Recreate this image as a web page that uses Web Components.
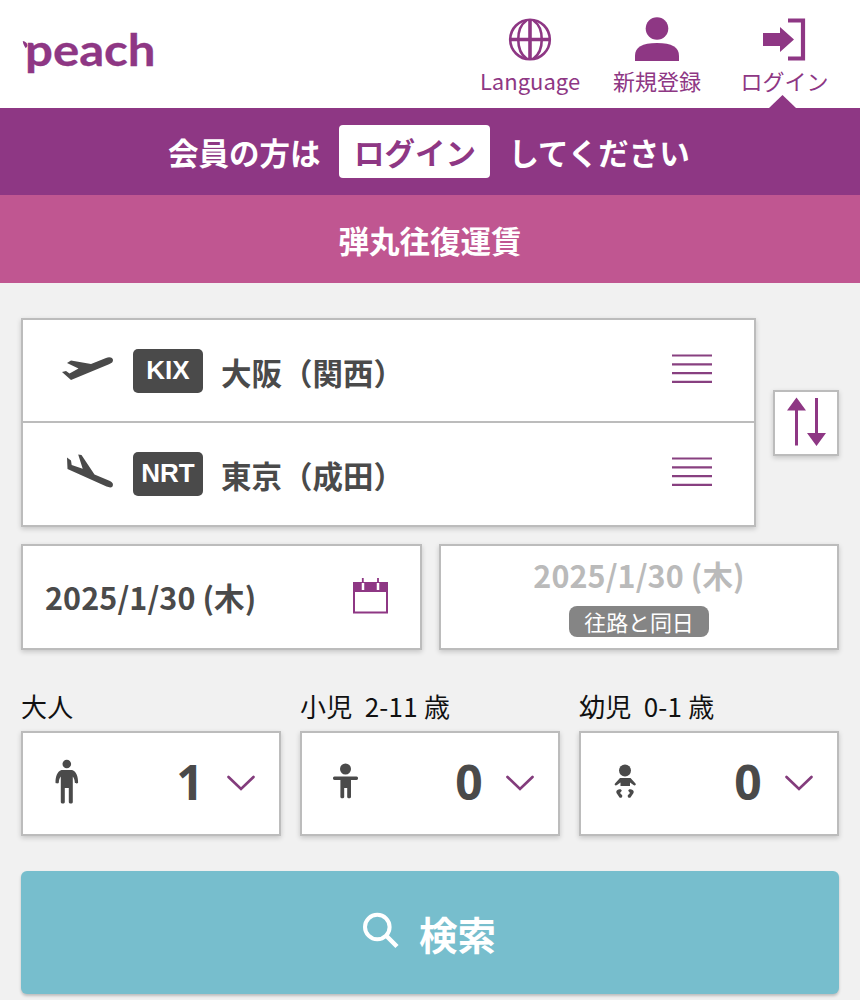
<!DOCTYPE html>
<html lang="ja">
<head>
<meta charset="utf-8">
<title>Peach</title>
<style>
html{background:#fff}
body{margin:0;width:860px;height:1002px;overflow:hidden;font-family:"Noto Sans CJK JP","Noto Sans",sans-serif;--purple:#8e3784;--dark:#4a4a4a;--line:#bcbcbc}
</style>
</head>
<body>
<peach-app></peach-app>
<script>
const define = (name, html) => {
  const t = document.createElement('template');
  t.innerHTML = '<style>*{box-sizing:border-box}svg{display:block;flex:none}</style>' + html;
  customElements.define(name, class extends HTMLElement {
    constructor() {
      super();
      this.attachShadow({ mode: 'open' }).appendChild(t.content.cloneNode(true));
    }
  });
};

define('peach-logo', `
<style>:host{display:block;width:140px;height:70px}text{font:700 44.500px Lato,sans-serif;fill:var(--purple);stroke:var(--purple);stroke-width:.3}</style>
<svg width="140" height="70" viewBox="20 16 140 70">
  <text x="25" y="65.500" textLength="130.500" lengthAdjust="spacingAndGlyphs">peach</text>
  <path d="M22.800 41c2.500.6 4.500 1.600 4.700 5l-1.700 2.200C24.500 46 23 44.500 22.800 41z" fill="#8e3784"/>
</svg>`);

define('nav-item', `
<style>
:host{display:flex;flex-direction:column;align-items:center;color:var(--purple);font-size:22px;line-height:32px;position:relative;white-space:nowrap}
.icon{height:64px;display:flex}
</style>
<div class="icon"><slot name="icon"></slot></div><slot></slot>`);

define('site-header', `
<style>
:host{display:flex;height:108px;background:#fff;position:relative}
peach-logo{margin:16px 0 0 20px}
nav{display:flex;margin-left:auto;margin-right:32px}
nav-item:nth-child(1){width:100px;margin-right:33px}
nav-item:nth-child(2){width:88px;margin-right:40px}
nav-item:nth-child(3){width:87px}
.pointer{position:absolute;left:769px;bottom:0}
</style>
<peach-logo></peach-logo>
<nav>
<nav-item><svg slot="icon" width="44" height="66" viewBox="507.500 0 44 66" fill="none" stroke="#8e3784" stroke-width="2.600"><circle cx="529.500" cy="39.500" r="19.800"/><path d="M509 39.500h41" stroke-width="3.500"/><path d="M529.500 20v39" stroke-width="3.600"/><path d="M526 20.500C515 28 515 51 526 58.500M533 20.500C544 28 544 51 533 58.500"/></svg>Language</nav-item>
<nav-item><svg slot="icon" width="46" height="66" viewBox="634 0 46 66" fill="#8e3784"><circle cx="657" cy="28.500" r="11.300"/><path d="M635 61V56C635 47 642 43 657 43s22 4 22 13v5z"/></svg>新規登録</nav-item>
<nav-item><svg slot="icon" width="44" height="66" viewBox="763 0 44 66"><path d="M763 33h17v-6l14 12.500L780 52v-6H763z" fill="#8e3784"/><path d="M788 20.500h15v38h-15" fill="none" stroke="#8e3784" stroke-width="4.200"/></svg>ログイン</nav-item>
</nav>
<svg class="pointer" width="27" height="13" viewBox="0 0 27 13"><path d="M0 13L13.500 0 27 13z" fill="#8e3784"/></svg>`);

define('member-bar', `
<style>
:host{display:flex;height:87px;background:var(--purple);color:#fff;font-weight:700;font-size:30.500px;line-height:55px;padding:17px 0 0 168px;align-items:flex-start;white-space:nowrap}
.btn{width:151px;height:53px;background:#fff;color:var(--purple);border-radius:4px;text-align:center;margin:0 19px 0 18px;padding-left:2px}
</style><span>会員の方は</span><span class="btn">ログイン</span><span>してください</span>`);

define('promo-bar', `
<style>:host{display:block;height:88px;background:#c05691;color:#fff;font-weight:700;font-size:30.500px;line-height:90px;text-align:center}</style><slot></slot>`);

define('field-box', `
<style>:host{display:flex;background:#fff;border:2px solid var(--line);box-shadow:0 2px 5px rgba(0,0,0,.18)}</style><slot></slot>`);

define('airport-row', `
<style>
:host{display:flex;height:102px;align-items:flex-start;color:var(--dark);font-size:30.500px;font-weight:700;white-space:nowrap}
.code{width:70px;height:44px;margin:29px 18px 0 0;border-radius:5px;background:var(--dark);color:#fff;font:700 26px/42px "Liberation Sans",Arial,sans-serif;text-align:center}
.name{line-height:46px;margin-top:29px}
.menu{margin:33px 42px 0 auto}
</style>
<slot name="plane"></slot><div class="code"><slot name="code"></slot></div><div class="name"><slot></slot></div>
<svg class="menu" width="40" height="32" viewBox="0 0 40 32"><path d="M0 2.500h40M0 11.300h40M0 20.100h40M0 28.900h40" stroke="#884080" stroke-width="2.200"/></svg>`);

define('route-picker', `
<style>
:host{display:flex;align-items:center;gap:17px;height:209px}
.route{width:735px;height:209px;flex-direction:column}
airport-row+airport-row{border-top:2px solid var(--line);height:104px;margin-top:-1px}
.swap{width:66px;height:66px}
</style>
<field-box class="route">
<airport-row><svg slot="plane" width="110" height="102" viewBox="23 320 110 102" fill="#4a4a4a"><path d="M62 372l4-1 3.500 2.500 9-5L67 363l4-2.500 20 3.500 15-6c4-1.800 7 0 7 2s-1 3-4 4.200L71 380z"/></svg><span slot="code">KIX</span>大阪（関西）</airport-row>
<airport-row><svg slot="plane" width="110" height="101" viewBox="23 423 110 101" fill="#4a4a4a"><path d="M67 457.500l4 3 .700 4.500 11 3.700-4.500-14.300 3.300.5 13 19.500 15.500 6.500c3 1.500 3.500 3.500 2.500 5.500-1 1.300-3 1.300-6 .2L67.500 469z"/></svg><span slot="code">NRT</span>東京（成田）</airport-row>
</field-box>
<field-box class="swap"><svg width="62" height="62" viewBox="775 392 62 62"><path d="M796.500 445.500V408M816.500 398v37" stroke="#8e3784" stroke-width="3"/><path d="M787 410.500l9.500-13 9.500 13zM807 433h19l-9.500 13z" fill="#8e3784"/></svg></field-box>`);

define('date-fields', `
<style>
:host{display:flex;gap:17px;height:106px;margin-top:17px;font-size:30.500px;font-weight:700;color:var(--dark);white-space:nowrap;letter-spacing:.1px}
.out{width:401px}.back{width:400px;flex-direction:column;align-items:center}
.out span{margin-left:22px;line-height:103px}
.out svg{margin-left:auto;margin-right:30px}
.back .d{color:#bababa;line-height:44px;margin-top:7px}
.tag{width:140px;height:31px;margin-top:9px;border-radius:8px;background:#858585;color:#fff;font-weight:400;font-size:22px;line-height:30px;text-align:center;letter-spacing:-.1px}
</style>
<field-box class="out"><span>2025/1/30 (木)</span><svg width="38" height="102" viewBox="352 546 38 102"><path d="M354 583h33v29.500h-33z" fill="none" stroke="#8e3784" stroke-width="2"/><path d="M353 582.500h35v9.500h-35z" fill="#8e3784"/><path d="M363 583v7M378 583v7" stroke="#fff" stroke-width="2.500"/><path d="M362.800 578v5M378 578v5" stroke="#8e3784" stroke-width="1.800"/></svg></field-box>
<field-box class="back"><span class="d">2025/1/30 (木)</span><span class="tag">往路と同日</span></field-box>`);

define('passenger-field', `
<style>
:host{display:block;color:#111;font-size:26px}
.label{height:50px;line-height:49px;white-space:pre;letter-spacing:.25px}
field-box{height:105px;align-items:flex-start}
.n{margin-left:auto;width:28px;text-align:center;font:700 48px/97px "Noto Sans",sans-serif;color:var(--dark)}
.chev{margin:39px 23px 0 22px}
</style>
<div class="label"><slot></slot></div>
<field-box><slot name="icon"></slot><span class="n"><slot name="count"></slot></span><svg class="chev" width="30" height="20" viewBox="0 0 30 20"><path d="M2.500 5L15 17 27.500 5" fill="none" stroke="#833c7c" stroke-width="2.700" stroke-linecap="round"/></svg></field-box>`);

define('passenger-row', `
<style>:host{display:grid;grid-template-columns:repeat(3,260px);gap:19px;margin:31px 0 35px}</style>
<passenger-field><svg slot="icon" width="86" height="101" viewBox="23 733 86 101" fill="#4a4a4a"><circle cx="66.800" cy="764" r="4.300"/><path d="M61.500 770h10.600c4.500 1.500 6 7 6 12.500 0 1.200-3.200 1.200-3.300 0-.2-3-.8-4.500-2-6v25.500c0 2-4 2-4 0V788h-4v14c0 2-4 2-4 0v-25.500c-1.200 1.500-1.800 3-2 6-.1 1.200-3.300 1.200-3.300 0 0-5.500 1.500-11 6-12.500z"/></svg>大人<span slot="count">1</span></passenger-field>
<passenger-field><svg slot="icon" width="86" height="101" viewBox="302 733 86 101" fill="#4a4a4a"><circle cx="345.500" cy="769" r="5.500"/><path d="M334.500 776.500h22c2 0 2 3.500 0 3.500H351v17c0 1.800-3.800 1.800-3.800 0v-9h-3v9c0 1.800-3.800 1.800-3.800 0v-17h-5.900c-2 0-2-3.500 0-3.500z"/></svg>小児  2-11 歳<span slot="count">0</span></passenger-field>
<passenger-field><svg slot="icon" width="86" height="101" viewBox="581 733 86 101" fill="#4a4a4a"><circle cx="625" cy="770.500" r="6"/><path d="M620 778h10.500l5 5.500c1.200 1.500-1 2.500-2 1.500l-3.500-2.500v3.500h-9.500v-3.500L617 785c-1.200 1-3.200 0-2-1.500z"/><path d="M616.500 793a2.500 2.500 0 0 1 2-3.500c2-.8 3 0 3.300 1.300l-1.800 2.200 2.200 2.200c.6 2-1.200 3-2.700 2.400zM633.500 793a2.500 2.500 0 0 0-2-3.500c-2-.8-3 0-3.300 1.300l1.800 2.200-2.200 2.200c-.6 2 1.200 3 2.700 2.400z"/></svg>幼児  0-1 歳<span slot="count">0</span></passenger-field>`);

define('search-button', `
<style>:host{display:flex;align-items:flex-start;height:123px;border-radius:6px;background:#77becd;color:#fff;font-weight:700;font-size:38.500px;line-height:125px;box-shadow:0 2px 3px rgba(0,0,0,.22)}svg{margin:39px 19px 0 339px}</style>
<svg width="40" height="42" viewBox="360 910 40 42" fill="none" stroke="#fff" stroke-width="4"><circle cx="377.300" cy="927" r="12.300"/><path d="M386 935.500l11 11" stroke-width="4.500"/></svg><span><slot></slot></span>`);

define('peach-app', `
<style>:host{display:block;width:860px;height:1000px;background:#f1f1f1;overflow:hidden}main{padding:35px 21px 0}</style>
<site-header></site-header><member-bar></member-bar><promo-bar>弾丸往復運賃</promo-bar>
<main><route-picker></route-picker><date-fields></date-fields><passenger-row></passenger-row><search-button>検索</search-button></main>`);
</script>
</body>
</html>
